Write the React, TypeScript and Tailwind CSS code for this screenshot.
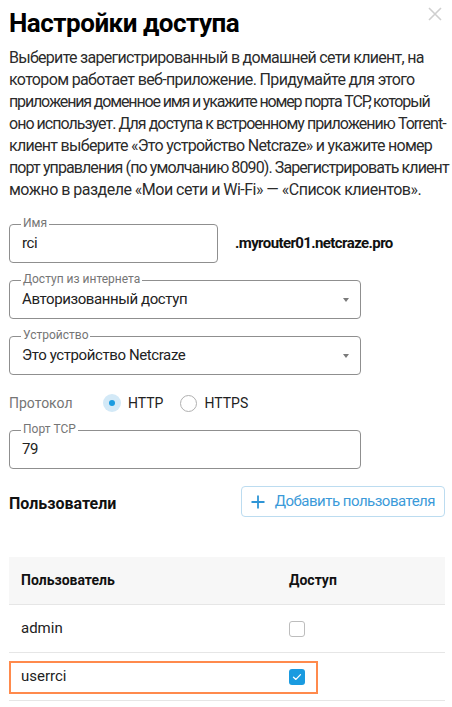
import type { ReactNode } from 'react';

const FONT = { fontFamily: 'Roboto, "Noto Sans", Arial, sans-serif' };

// lines broken as in the dialog, each with its own tracking so it keeps the same width
const INTRO = [
  { text: 'Выберите зарегистрированный в домашней сети клиент, на', cls: 'tracking-[-0.72px]' },
  { text: 'котором работает веб-приложение. Придумайте для этого', cls: 'tracking-[-0.65px]' },
  { text: 'приложения доменное имя и укажите номер порта TCP, который', cls: 'tracking-[-1.15px]' },
  { text: 'оно использует. Для доступа к встроенному приложению Torrent-', cls: 'tracking-[-0.98px]' },
  { text: 'клиент выберите «Это устройство Netcraze» и укажите номер', cls: 'tracking-[-0.7px]' },
  { text: 'порт управления (по умолчанию 8090). Зарегистрировать клиент', cls: 'tracking-[-0.9px]' },
  { text: 'можно в разделе «Мои сети и Wi-Fi» — «Список клиентов».', cls: 'tracking-[-0.52px]' },
];

function Field({ label, children, className = '' }: { label: string; children: ReactNode; className?: string }) {
  return (
    <div className={`relative h-[39px] rounded-[4px] border border-[#8f8f8f] flex items-center pl-[12px] pr-[11px] ${className}`}>
      <span className="absolute left-[11px] -top-[9px] px-[2px] bg-white text-[12px] leading-[14px] text-[#757575]">
        {label}
      </span>
      {children}
    </div>
  );
}

function SelectField({ label, value }: { label: string; value: string }) {
  return (
    <Field label={label} className="w-[352px]">
      <span className="text-[15px] tracking-[-0.4px] text-[#222]">{value}</span>
      <span className="ml-auto w-0 h-0 border-l-[3.5px] border-r-[3.5px] border-t-[4px] border-l-transparent border-r-transparent border-t-[#7a7a7a]" />
    </Field>
  );
}

function Radio({ checked, label }: { checked: boolean; label: string }) {
  return (
    <div className="flex items-center gap-[7px]">
      {checked ? (
        <span className="w-[18px] h-[18px] rounded-full bg-[#d3e9f7] flex items-center justify-center">
          <span className="w-[6px] h-[6px] rounded-full bg-[#1a9be0]" />
        </span>
      ) : (
        <span className="w-[17px] h-[17px] rounded-full border border-[#b0b0b0]" />
      )}
      <span className="text-[14px] text-[#222]">{label}</span>
    </div>
  );
}

function Checkbox({ checked }: { checked: boolean }) {
  if (checked) {
    return (
      <span className="w-[16px] h-[16px] rounded-[3px] bg-[#1a9be0] flex items-center justify-center">
        <svg width="10" height="8" viewBox="0 0 10 8" fill="none">
          <path d="M1.5 4.2 L3.9 6.4 L8.5 1.6" stroke="white" strokeWidth="1.3" strokeLinecap="round" strokeLinejoin="round" />
        </svg>
      </span>
    );
  }
  return <span className="w-[16px] h-[16px] rounded-[3px] border-[1.5px] border-[#bdbdbd]" />;
}

const users = [
  { name: 'admin', access: false, highlight: false },
  { name: 'userrci', access: true, highlight: true },
];

export default function App() {
  return (
    <div className="w-[452px] bg-white pl-[9px] pr-[7px] text-[#222]" style={FONT}>
      {/* Header */}
      <div className="flex justify-between items-start">
        <h1 className="pt-[6px] text-[26px] leading-[34px] tracking-[-0.5px] font-bold text-black">Настройки доступа</h1>
        <svg className="mt-[7px] mr-[3px]" width="14" height="14" viewBox="0 0 14 14">
          <path d="M1 1 L13 13 M13 1 L1 13" stroke="#cfcfcf" strokeWidth="1.6" />
        </svg>
      </div>

      <p className="mt-[7px] text-[16px] leading-[22px] text-[#2b2b2b] whitespace-nowrap">
        {INTRO.map((line, i) => (
          <span key={i} className={`block ${line.cls}`}>
            {line.text}
          </span>
        ))}
      </p>

      {/* Name */}
      <div className="mt-[23px] flex items-center gap-[17px]">
        <Field label="Имя" className="w-[209px]">
          <span className="text-[15px] tracking-[-0.4px] text-[#222]">rci</span>
        </Field>
        <span className="text-[15px] tracking-[-0.6px] font-bold text-[#111]">.myrouter01.netcraze.pro</span>
      </div>

      <div className="mt-[17px]">
        <SelectField label="Доступ из интернета" value="Авторизованный доступ" />
      </div>
      <div className="mt-[17px]">
        <SelectField label="Устройство" value="Это устройство Netcraze" />
      </div>

      {/* Protocol */}
      <div className="mt-[16px] h-[24px] flex items-center">
        <span className="w-[94px] text-[14px] text-[#757575]">Протокол</span>
        <div className="flex items-center gap-[17px]">
          <Radio checked label="HTTP" />
          <Radio checked={false} label="HTTPS" />
        </div>
      </div>

      <Field label="Порт TCP" className="mt-[15px] w-[352px]">
        <span className="text-[15px] tracking-[-0.4px] text-[#222]">79</span>
      </Field>

      {/* Users */}
      <div className="mt-[17px] flex justify-between items-center">
        <h2 className="pt-[5px] text-[16px] font-bold text-[#111]">Пользователи</h2>
        <button className="h-[31px] flex items-center gap-[10px] pl-[9px] pr-[9px] rounded-[4px] border border-[#bcdcf0] bg-white">
          <svg width="14" height="14" viewBox="0 0 14 14">
            <path d="M7 0.5 V13.5 M0.5 7 H13.5" stroke="#2f95d6" strokeWidth="1.8" />
          </svg>
          <span className="text-[15px] tracking-[-0.5px] text-[#3b9ad9]">Добавить пользователя</span>
        </button>
      </div>

      <div className="mt-[40px]">
        <div className="h-[48px] flex items-center bg-[#f7f7f7] border-b border-[#e6e6e6]">
          <span className="w-[280px] pl-[12px] text-[14px] font-bold text-[#111]">Пользователь</span>
          <span className="text-[14px] font-bold text-[#111]">Доступ</span>
        </div>
        {users.map((u) => (
          <div key={u.name} className="relative h-[48px] flex items-center border-b border-[#e6e6e6]">
            <span className="w-[280px] pl-[12px] text-[15px] text-[#222]">{u.name}</span>
            <Checkbox checked={u.access} />
            {u.highlight && (
              <div className="absolute left-0 top-[8px] w-[309px] h-[33px] border-2 border-[#ff8a4c]" />
            )}
          </div>
        ))}
      </div>
    </div>
  );
}
